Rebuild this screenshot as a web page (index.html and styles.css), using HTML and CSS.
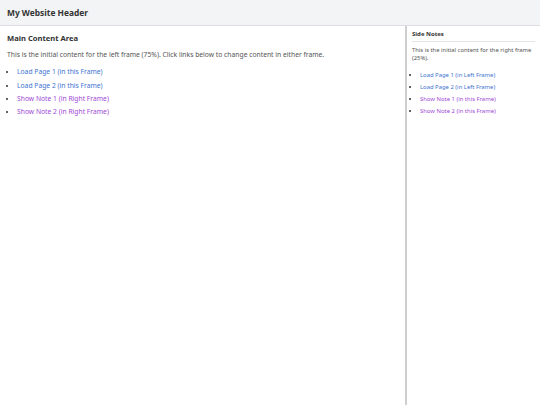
FILE: index.html
```html
<!DOCTYPE html>
<html lang="en">
<head>
    <meta charset="UTF-8">
    <meta name="viewport" content="width=device-width, initial-scale=1.0">
    <title>Frames Demo</title>
    <link rel="stylesheet" href="styles.css">
</head>
<body>
    <div class="header">
        <h1>My Website Header</h1>
    </div>
    <div class="frames">
        <div class="main-frame">
            <h2>Main Content Area</h2>
            <p>This is the initial content for the left frame (75%). Click links below to change content in either frame.</p>
            <ul class="links">
                <li><a href="#" class="page-link">Load Page 1 (in this Frame)</a></li>
                <li><a href="#" class="page-link">Load Page 2 (in this Frame)</a></li>
                <li><a href="#" class="note-link">Show Note 1 (in Right Frame)</a></li>
                <li><a href="#" class="note-link">Show Note 2 (in Right Frame)</a></li>
            </ul>
        </div>
        <div class="side-frame">
            <h3>Side Notes</h3>
            <p>This is the initial content for the right frame (25%).</p>
            <ul class="links">
                <li><a href="#" class="page-link">Load Page 1 (in Left Frame)</a></li>
                <li><a href="#" class="page-link">Load Page 2 (in Left Frame)</a></li>
                <li><a href="#" class="note-link">Show Note 1 (in this Frame)</a></li>
                <li><a href="#" class="note-link">Show Note 2 (in this Frame)</a></li>
            </ul>
        </div>
    </div>
</body>
</html>
```

FILE: styles.css
```css
html, body {
    height: 100%;
}
body {
    font-family: "Noto Sans", "Open Sans", sans-serif;
    margin: 0;
    display: flex;
    flex-direction: column;
    color: #333;
    background-color: white;
}
.header {
    height: 25px;
    background-color: #f3f4f6;
    border-bottom: 1px solid #dcdde0;
    display: flex;
    align-items: center;
    padding: 0 7px;
    flex-shrink: 0;
}
.header h1 {
    margin: 0;
    font-size: 8.4px;
    font-weight: bold;
    color: #333;
}
.frames {
    flex: 1;
    display: flex;
}
.main-frame {
    width: 407px;
    padding: 7px 7px;
    box-sizing: border-box;
    border-right: 2px solid #cfcfcf;
}
.side-frame {
    flex: 1;
    padding: 4px 5px;
}
h2 {
    font-size: 7.6px;
    margin: 0 0 7px 0;
    color: #333;
}
h3 {
    font-size: 6px;
    margin: 0 0 4px 0;
    padding-bottom: 3px;
    border-bottom: 1px solid #e5e5e5;
    color: #333;
}
p {
    font-size: 6.75px;
    color: #555;
    margin: 0 0 8px 0;
    line-height: 1.4;
}
.side-frame p {
    font-size: 5.85px;
    line-height: 1.45;
    margin-bottom: 8px;
}
.links {
    margin: 0;
    padding-left: 10px;
}
.links li {
    font-size: 6.75px;
    margin-bottom: 4.2px;
}
.side-frame .links {
    padding-left: 8px;
}
.side-frame .links li {
    font-size: 5.9px;
    margin-bottom: 3.9px;
}
a {
    text-decoration: none;
}
.page-link {
    color: #4174d2;
}
.note-link {
    color: #a049d6;
}
```
